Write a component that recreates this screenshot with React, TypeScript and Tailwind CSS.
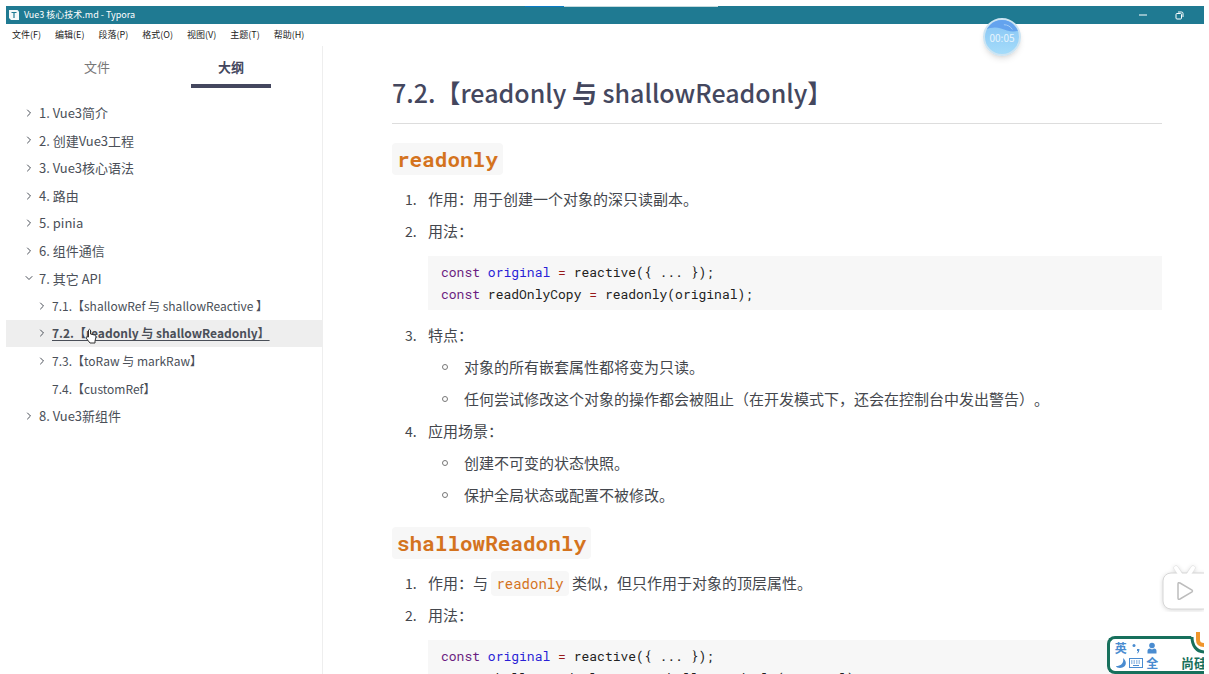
import { useState } from "react";
import { ChevronDown, ChevronRight } from "lucide-react";

const menus = ["文件(F)", "编辑(E)", "段落(P)", "格式(O)", "视图(V)", "主题(T)", "帮助(H)"];

interface OutlineItem {
  id: string;
  label: string;
  level: 1 | 2;
  state: "closed" | "open" | "leaf";
}

const outline: OutlineItem[] = [
  { id: "1", label: "1. Vue3简介", level: 1, state: "closed" },
  { id: "2", label: "2. 创建Vue3工程", level: 1, state: "closed" },
  { id: "3", label: "3. Vue3核心语法", level: 1, state: "closed" },
  { id: "4", label: "4. 路由", level: 1, state: "closed" },
  { id: "5", label: "5. pinia", level: 1, state: "closed" },
  { id: "6", label: "6. 组件通信", level: 1, state: "closed" },
  { id: "7", label: "7. 其它 API", level: 1, state: "open" },
  { id: "7.1", label: "7.1.【shallowRef 与 shallowReactive 】", level: 2, state: "closed" },
  { id: "7.2", label: "7.2.【readonly 与 shallowReadonly】", level: 2, state: "closed" },
  { id: "7.3", label: "7.3.【toRaw 与 markRaw】", level: 2, state: "closed" },
  { id: "7.4", label: "7.4.【customRef】", level: 2, state: "leaf" },
  { id: "8", label: "8. Vue3新组件", level: 1, state: "closed" },
];

function TitleBar() {
  return (
    <header className="flex h-[18px] items-center bg-[#1f7a92] pl-[2px] text-white">
      <svg viewBox="0 0 12 12" className="mr-1 size-3">
        <path d="M1 1h8.500l1.500 1.500V11H3L1 9z" fill="#f4f8f9" />
        <path d="M3.500 3.500h5M6 3.500V9" stroke="#1f7a92" strokeWidth="1.200" fill="none" />
      </svg>
      <h1 className="text-[9px]">Vue3 核心技术.md - Typora</h1>
      <button aria-label="最小化" className="ml-auto mr-7">
        <svg viewBox="0 0 8 8" className="size-2" stroke="currentColor">
          <path d="M0 4h8" />
        </svg>
      </button>
      <button aria-label="还原" className="mr-5">
        <svg viewBox="0 0 9 9" className="size-[9px]" stroke="currentColor" fill="none">
          <rect x="1" y="2.500" width="5.500" height="5.500" rx="1" />
          <path d="M3 1h3.500a1.500 1.500 0 0 1 1.500 1.500V6" />
        </svg>
      </button>
    </header>
  );
}

function Sidebar() {
  const [active, setActive] = useState("7.2");

  return (
    <aside className="w-[317px] shrink-0 border-r border-[#eeeeee]">
      <div className="flex justify-around px-6 pt-[11px] pb-[11px]">
        <button className="flex h-[31px] w-20 items-start justify-center text-[13px] text-[#777777]">文件</button>
        <button className="flex h-[31px] w-20 items-start justify-center border-b-4 border-[#44475e] text-[13px] font-bold text-[#44475e]">
          大纲
        </button>
      </div>
      <nav className="grid h-[331px] auto-rows-fr">
        {outline.map((item) => {
          const isActive = item.id === active;
          return (
            <button
              key={item.id}
              onClick={() => setActive(item.id)}
              className={`flex items-center text-left whitespace-nowrap text-[#4a4f58] ${
                item.level === 1 ? "pl-[17px] text-[13px]" : "pl-[30px] text-[12px]"
              } ${isActive ? "bg-[#eeeeee] font-bold" : ""}`}
            >
              <span className="w-4 shrink-0">
                {item.state === "closed" && <ChevronRight size={12} />}
                {item.state === "open" && <ChevronDown size={12} />}
              </span>
              <span className={isActive ? "underline underline-offset-2" : ""}>{item.label}</span>
            </button>
          );
        })}
      </nav>
    </aside>
  );
}

const codeFont = "font-['Roboto_Mono','DejaVu_Sans_Mono',monospace]";

function Keyword({ children }: { children: string }) {
  return <span className="text-[#6b1d80]">{children}</span>;
}

function Operator() {
  return <span className="text-[#981a1a]">=</span>;
}

function CodeBlock({ name, fn, fnVar }: { name: string; fn: string; fnVar: string }) {
  return (
    <pre className={`mt-[9px] mb-[9px] bg-[#f7f7f7] px-[13px] py-[5px] text-[13px] leading-[22px] text-[#222222] ${codeFont}`}>
      <Keyword>const</Keyword> <span className="text-[#2a1fd6]">{name}</span> <Operator /> reactive
      {"({ ... });\n"}
      <Keyword>const</Keyword> {fnVar} <Operator /> {fn}
      {"(original);"}
    </pre>
  );
}

function Item({ index, children }: { index: number; children: React.ReactNode }) {
  return (
    <li className="flex">
      <span className="w-9 shrink-0 pl-[13px] text-[14px]">{index}.</span>
      <div className="min-w-0 flex-1">{children}</div>
    </li>
  );
}

function SubList({ items }: { items: string[] }) {
  return (
    <ul>
      {items.map((item) => (
        <li key={item} className="flex items-center pl-[14px]">
          <span className="mr-4 size-[6px] rounded-full border border-[#777777]" />
          {item}
        </li>
      ))}
    </ul>
  );
}

function CodeHeading({ children }: { children: string }) {
  return (
    <h3 className={`w-fit rounded-sm bg-[#f7f7f7] px-[5px] text-[21px] leading-8 font-bold text-[#d4731e] ${codeFont}`}>
      {children}
    </h3>
  );
}

function Article() {
  return (
    <main className="min-w-0 flex-1 pt-7 pr-[42px] pl-[69px] text-[15px] leading-8 text-[#44474d] [text-spacing-trim:space-all]">
      <h2 className="border-b border-[#dddddd] pb-[13px] text-[25px] leading-9 font-medium text-[#44475e]">
        7.2.【readonly <b>与</b> shallowReadonly】
      </h2>
      <div className="mt-[19px]">
        <CodeHeading>readonly</CodeHeading>
      </div>
      <ol className="mt-2">
        <Item index={1}>作用：用于创建一个对象的深只读副本。</Item>
        <Item index={2}>
          用法：
          <CodeBlock name="original" fnVar="readOnlyCopy" fn="readonly" />
        </Item>
        <Item index={3}>
          特点：
          <SubList
            items={[
              "对象的所有嵌套属性都将变为只读。",
              "任何尝试修改这个对象的操作都会被阻止（在开发模式下，还会在控制台中发出警告）。",
            ]}
          />
        </Item>
        <Item index={4}>
          应用场景：
          <SubList items={["创建不可变的状态快照。", "保护全局状态或配置不被修改。"]} />
        </Item>
      </ol>
      <div className="mt-4">
        <CodeHeading>shallowReadonly</CodeHeading>
      </div>
      <ol className="mt-2">
        <Item index={1}>
          作用：与{" "}
          <code className={`rounded-sm bg-[#f7f7f7] px-[5px] py-[3px] text-[14px] leading-4 text-[#d4731e] ${codeFont}`}>
            readonly
          </code>{" "}
          类似，但只作用于对象的顶层属性。
        </Item>
        <Item index={2}>
          用法：
          <CodeBlock name="original" fnVar="shallowReadOnlyCopy" fn="shallowReadonly" />
        </Item>
      </ol>
    </main>
  );
}

function RecordTimer() {
  return (
    <div className="absolute top-[18px] right-[188px] flex size-[38px] items-center justify-center overflow-hidden rounded-full border-2 border-[#cde4f2] bg-linear-to-b from-[#86c4f4] to-[#a5dcfa] shadow-md">
      <svg viewBox="0 0 36 36" className="absolute inset-0 size-full">
        <path d="M0 0h36v11c-7 3-13 0-19-2S6 8 0 10z" fill="#64a3ee" />
        <path d="M20 5c4 0 7 2 9 5" stroke="#a9d0f7" fill="none" />
      </svg>
      <time className="relative text-[10px] text-[#e6f4fd]">00:05</time>
    </div>
  );
}

function PlayerButton() {
  return (
    <button aria-label="播放" className="absolute right-[5px] bottom-[62px] w-[45px] overflow-hidden">
      <svg viewBox="0 0 45 50" className="h-[50px] w-[45px] drop-shadow-sm" fill="white">
        <path d="M17 6l6 8M34 6l-6 8" stroke="#e2e2e2" strokeWidth="5" strokeLinecap="round" />
        <rect x="4" y="11" width="52" height="36" rx="8" stroke="#d6d6d6" />
        <path d="M17 6l6 9M34 6l-6 9" stroke="white" strokeWidth="4" strokeLinecap="round" />
        <path d="M19 22v14q0 2 2 1l12-7q1-1 0-2l-12-7q-2-1-2 1z" stroke="#bdbdbd" strokeWidth="1.500" />
      </svg>
    </button>
  );
}

function ImeBar() {
  return (
    <div className="absolute right-[5px] bottom-0 h-[42px] w-[97px] overflow-hidden">
      <div className="mt-1 h-[38px] rounded-l-lg border-[3px] border-r-0 border-[#17705c] bg-white">
        <div className="grid w-[50px] grid-cols-3 items-center justify-items-center pt-px pl-[3px] text-[12px] leading-[15px] font-bold text-[#4a8cd0]">
          <span>英</span>
          <svg viewBox="0 0 12 12" className="size-3" fill="currentColor">
            <circle cx="4" cy="3.500" r="1.500" />
            <path d="M7 7h2.500q0 3-2 4.500L7 11q1-1 1-2H7z" />
          </svg>
          <svg viewBox="0 0 12 12" className="size-3" fill="currentColor">
            <circle cx="6" cy="3.500" r="2.800" />
            <path d="M1.500 11.500V9q0-2.500 2.500-2.500l2 1 2-1q2.500 0 2.500 2.500v2.500z" />
          </svg>
          <svg viewBox="0 0 12 12" className="size-3" fill="currentColor">
            <path d="M8 1c5 4 3 10-3 10-2 0-4-1-4-2 6 0 8-4 7-8z" />
          </svg>
          <svg viewBox="0 0 14 10" className="h-[10px] w-[14px]" fill="none" stroke="currentColor">
            <rect x="0.500" y="0.500" width="13" height="9" />
            <path d="M2 3h10M2 5h10" strokeDasharray="1.500 1" />
            <path d="M4 7.500h6" />
          </svg>
          <span>全</span>
        </div>
      </div>
      {/* brand badge on the right end of the bar */}
      <svg viewBox="0 0 14 26" className="absolute top-0 right-0 h-[26px] w-[14px]" fill="none">
        <path d="M0 0h14v20C7 20 2 14 2 7z" fill="white" />
        <path d="M2 5c0 8 4 15 13 15" stroke="#17705c" strokeWidth="3" />
        <path d="M8 0v8q0 5 6 5" stroke="#f0962c" strokeWidth="4" />
      </svg>
      <span className="absolute right-0 bottom-[3px] w-[23px] overflow-hidden text-[13px] leading-4 font-bold whitespace-nowrap text-[#17705c]">
        尚硅
      </span>
    </div>
  );
}

export default function App() {
  return (
    <div className="relative h-screen overflow-hidden bg-white pt-[6px] pr-[5px] pl-[6px] font-['Noto_Sans_CJK_SC',sans-serif]">
      <div className="absolute top-[6px] left-[525px] flex h-px w-[193px]">
        <div className="w-[39px] bg-[#0a7bc4]" />
        <div className="flex-1 bg-[#c4dade]" />
      </div>
      <TitleBar />
      <div className="flex h-[22px] items-center gap-[14px] pl-[6px] text-[9px] text-[#222222]">
        {menus.map((menu) => (
          <button key={menu}>{menu}</button>
        ))}
      </div>
      <div className="flex">
        <Sidebar />
        <Article />
      </div>
      <RecordTimer />
      <PlayerButton />
      <ImeBar />
      {/* mouse pointer */}
      <svg viewBox="0 0 12 16" className="absolute top-[328px] left-[85px] h-4 w-3" fill="white" stroke="#333333">
        <path d="M3.500 9V2q1-1.500 2 0v4l4 1q1.500 0 1.500 2l-1 4v2H5L1 10q0-2 2.500-1z" />
      </svg>
    </div>
  );
}
